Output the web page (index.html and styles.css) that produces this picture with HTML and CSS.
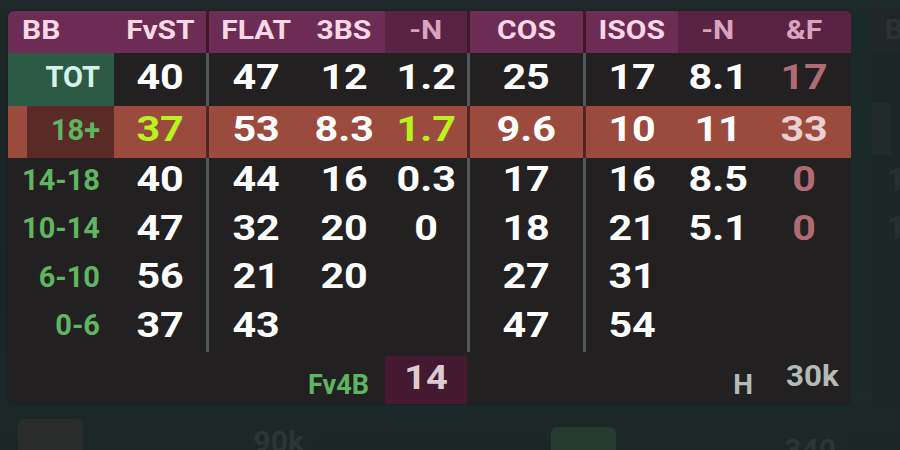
FILE: index.html
```html
<!DOCTYPE html>
<html>
<head>
<meta charset="utf-8">
<link rel="stylesheet" href="styles.css">
</head>
<body>
<div class="scene">
  <div class="top">
    <div class="panel">
      <div class="row head">
        <div class="c c-lbl hl"><span class="t">BB</span></div>
        <div class="c c-fvst"><span class="t">FvST</span></div>
        <div class="c c-flat"><span class="t">FLAT</span></div>
        <div class="c c-3bs"><span class="t">3BS</span></div>
        <div class="c c-n1 dk"><span class="t">-N</span></div>
        <div class="c c-cos"><span class="t">COS</span></div>
        <div class="c c-isos"><span class="t">ISOS</span></div>
        <div class="c c-n2 dk"><span class="t">-N</span></div>
        <div class="c c-f dk"><span class="t">&amp;F</span></div>
      </div>
      <div class="row tot">
        <div class="c c-lbl lbl totl"><span class="l">TOT</span></div>
        <div class="c c-fvst"><span class="v">40</span></div>
        <div class="c c-flat"><span class="v">47</span></div>
        <div class="c c-3bs"><span class="v">12</span></div>
        <div class="c c-n1"><span class="v">1.2</span></div>
        <div class="c c-cos"><span class="v">25</span></div>
        <div class="c c-isos"><span class="v">17</span></div>
        <div class="c c-n2"><span class="v">8.1</span></div>
        <div class="c c-f"><span class="v muted">17</span></div>
      </div>
      <div class="row hot">
        <div class="c c-lbl lbl hotl"><span class="l">18+</span></div>
        <div class="c c-fvst"><span class="v lime">37</span></div>
        <div class="c c-flat"><span class="v">53</span></div>
        <div class="c c-3bs"><span class="v">8.3</span></div>
        <div class="c c-n1"><span class="v lime">1.7</span></div>
        <div class="c c-cos"><span class="v">9.6</span></div>
        <div class="c c-isos"><span class="v">10</span></div>
        <div class="c c-n2"><span class="v">11</span></div>
        <div class="c c-f"><span class="v pale">33</span></div>
      </div>
      <div class="row body">
        <div class="c c-lbl lbl"><span class="l">14-18</span></div>
        <div class="c c-fvst"><span class="v">40</span></div>
        <div class="c c-flat"><span class="v">44</span></div>
        <div class="c c-3bs"><span class="v">16</span></div>
        <div class="c c-n1"><span class="v">0.3</span></div>
        <div class="c c-cos"><span class="v">17</span></div>
        <div class="c c-isos"><span class="v">16</span></div>
        <div class="c c-n2"><span class="v">8.5</span></div>
        <div class="c c-f"><span class="v muted">0</span></div>
      </div>
      <div class="row body">
        <div class="c c-lbl lbl"><span class="l">10-14</span></div>
        <div class="c c-fvst"><span class="v">47</span></div>
        <div class="c c-flat"><span class="v">32</span></div>
        <div class="c c-3bs"><span class="v">20</span></div>
        <div class="c c-n1"><span class="v">0</span></div>
        <div class="c c-cos"><span class="v">18</span></div>
        <div class="c c-isos"><span class="v">21</span></div>
        <div class="c c-n2"><span class="v">5.1</span></div>
        <div class="c c-f"><span class="v muted">0</span></div>
      </div>
      <div class="row body">
        <div class="c c-lbl lbl"><span class="l">6-10</span></div>
        <div class="c c-fvst"><span class="v">56</span></div>
        <div class="c c-flat"><span class="v">21</span></div>
        <div class="c c-3bs"><span class="v">20</span></div>
        <div class="c c-n1"></div>
        <div class="c c-cos"><span class="v">27</span></div>
        <div class="c c-isos"><span class="v">31</span></div>
        <div class="c c-n2"></div>
        <div class="c c-f"></div>
      </div>
      <div class="row body">
        <div class="c c-lbl lbl"><span class="l">0-6</span></div>
        <div class="c c-fvst"><span class="v">37</span></div>
        <div class="c c-flat"><span class="v">43</span></div>
        <div class="c c-3bs"></div>
        <div class="c c-n1"></div>
        <div class="c c-cos"><span class="v">47</span></div>
        <div class="c c-isos"><span class="v">54</span></div>
        <div class="c c-n2"></div>
        <div class="c c-f"></div>
      </div>
      <div class="row foot">
        <div class="fc fc-left"><span class="fv4b">Fv4B</span></div>
        <div class="fc fc-14"><span class="fnum">14</span></div>
        <div class="fc fc-mid"></div>
        <div class="fc fc-h"><span class="fh">H</span></div>
        <div class="fc fc-30k"><span class="f30">30k</span></div>
      </div>
    </div>
    <div class="gutter"></div>
    <div class="side">
      <div class="side-head"><span>B</span></div>
      <div class="side-row"></div>
      <div class="side-row"><div class="side-blk"></div></div>
      <div class="side-num"><span>1</span></div>
      <div class="side-num"><span>1</span></div>
    </div>
  </div>
  <div class="lower">
    <div class="slot slot-a">
      <div class="sq sq-grey"></div>
      <span class="slot-txt">90k</span>
    </div>
    <div class="slot slot-b">
      <div class="sq sq-green"></div>
      <span class="slot-txt">340</span>
    </div>
  </div>
</div>
</body>
</html>
```

FILE: styles.css
```css
html, body {
  margin: 0;
  padding: 0;
}
body {
  width: 900px;
  height: 450px;
  overflow: hidden;
  background: #1b2526;
  font-family: Roboto, "Liberation Sans", sans-serif;
  font-weight: 700;
}
.scene {
  width: 900px;
  height: 450px;
  background: linear-gradient(180deg, #1e2a2a 0px, #1c2727 12px, #1b2526 120px, #1a2425 300px, #1c2828 420px, #1b2626 450px);
}
.top {
  display: flex;
  align-items: flex-start;
  padding-left: 8px;
}
.panel {
  flex: 0 0 843px;
  margin-top: 11px;
  width: 843px;
  background: #222021;
  border-radius: 6px;
  overflow: hidden;
  box-shadow: 0 0 0 1px rgba(0,0,0,0.12);
}
.row {
  display: flex;
}
.c {
  box-sizing: border-box;
  flex: 0 0 auto;
  display: flex;
  align-items: center;
  justify-content: center;
  padding-bottom: 5px;
}
.c-lbl { width: 106px; }
.c-fvst { width: 92px; }
.c-flat { width: 97px; border-left: 3px solid #50575b; }
.c-3bs { width: 82px; }
.c-n1 { width: 82px; }
.c-cos { width: 116px; border-left: 3px solid #50575b; }
.c-isos { width: 95px; border-left: 3px solid #50575b; }
.c-n2 { width: 80px; }
.c-f { width: 93px; }

.head { height: 42px; background: #6d2c53; }
.head .c { padding-bottom: 3px; border-left-color: #3f1a22; }
.head .dk { background: #5a2243; }
.head .t {
  display: inline-block;
  font-size: 25px;
  color: #fcd7e5;
  transform: scaleX(1.2);
}
.head .dk .t { color: #d9a3bd; }
.head .hl { justify-content: flex-start; padding-left: 14px; }
.head .hl .t { transform-origin: left center; }

.tot { height: 53px; }
.hot { height: 52px; background: #9b4a3e; }
.hot .c { border-left-color: #4d2524; }
.body { height: 48.5px; }

.lbl {
  justify-content: flex-end;
  padding-right: 14px;
}
.l {
  font-size: 29px;
  color: #5fb562;
}
.totl { background: #2c5a45; }
.totl .l { color: #d6f1e6; font-size: 29px; }
.hotl { background: linear-gradient(90deg, #9b4a3e 0 19px, #5a2a27 19px); }

.v {
  display: inline-block;
  font-size: 35px;
  color: #ffffff;
  transform: scaleX(1.18);
}
.v.lime { color: #b9f21f; }
.v.muted { color: #b16b74; }
.v.pale { color: #e9cfd1; }

.foot {
  height: 52px;
  align-items: flex-end;
}
.fc {
  box-sizing: border-box;
  flex: 0 0 auto;
  height: 48px;
  display: flex;
  align-items: center;
}
.fc-left {
  width: 377px;
  justify-content: flex-end;
  padding-right: 16px;
  padding-top: 10px;
}
.fv4b {
  font-size: 27px;
  color: #5fb562;
}
.fc-14 {
  width: 82px;
  background: #45192f;
  justify-content: center;
  padding-bottom: 6px;
}
.fnum {
  display: inline-block;
  font-size: 33px;
  color: #dccbd5;
  transform: scaleX(1.15);
}
.fc-mid { width: 211px; }
.fc-h {
  width: 80px;
  justify-content: flex-end;
  padding-right: 5px;
  padding-top: 8px;
}
.fh { font-size: 28px; color: #b3bbb6; }
.fc-30k {
  width: 93px;
  justify-content: flex-end;
  padding-right: 12px;
  padding-bottom: 8px;
}
.f30 {
  display: inline-block;
  font-size: 29px;
  color: #b3bbb6;
  transform: scaleX(1.08);
  transform-origin: right center;
}

.gutter {
  flex: 0 0 21px;
  height: 392px;
  margin-top: 10px;
  background: #1d2a2a;
  opacity: 0.9;
}
.side {
  margin-top: 7px;
  flex: 1;
  height: 396px;
  background: #1b2627;
}
.side-head {
  height: 44px;
  background: #212729;
  padding-left: 13px;
  display: flex;
  align-items: center;
}
.side-head span {
  font-size: 28px;
  color: #2b3335;
}
.side-row {
  height: 52px;
}
.side-blk {
  width: 19px;
  height: 52px;
  background: #232a2b;
}
.side-num {
  height: 48px;
  padding-left: 15px;
  display: flex;
  align-items: center;
}
.side-num span {
  font-size: 32px;
  color: #26322f;
}

.lower {
  display: flex;
  margin-top: 15px;
  padding-left: 18px;
}
.slot {
  display: flex;
  height: 40px;
  background: #1c2828;
}
.slot-a { width: 298px; }
.slot-b { width: 297px; margin-left: 235px; margin-top: 8px; }
.sq {
  width: 65px;
  height: 40px;
  border-radius: 6px 6px 0 0;
}
.sq-grey { background: #2a2c2c; }
.sq-green { background: #263a2e; }
.slot-txt {
  margin-left: auto;
  padding-right: 12px;
  padding-top: 6px;
  font-size: 30px;
  line-height: 34px;
  color: #2d3535;
}
```
